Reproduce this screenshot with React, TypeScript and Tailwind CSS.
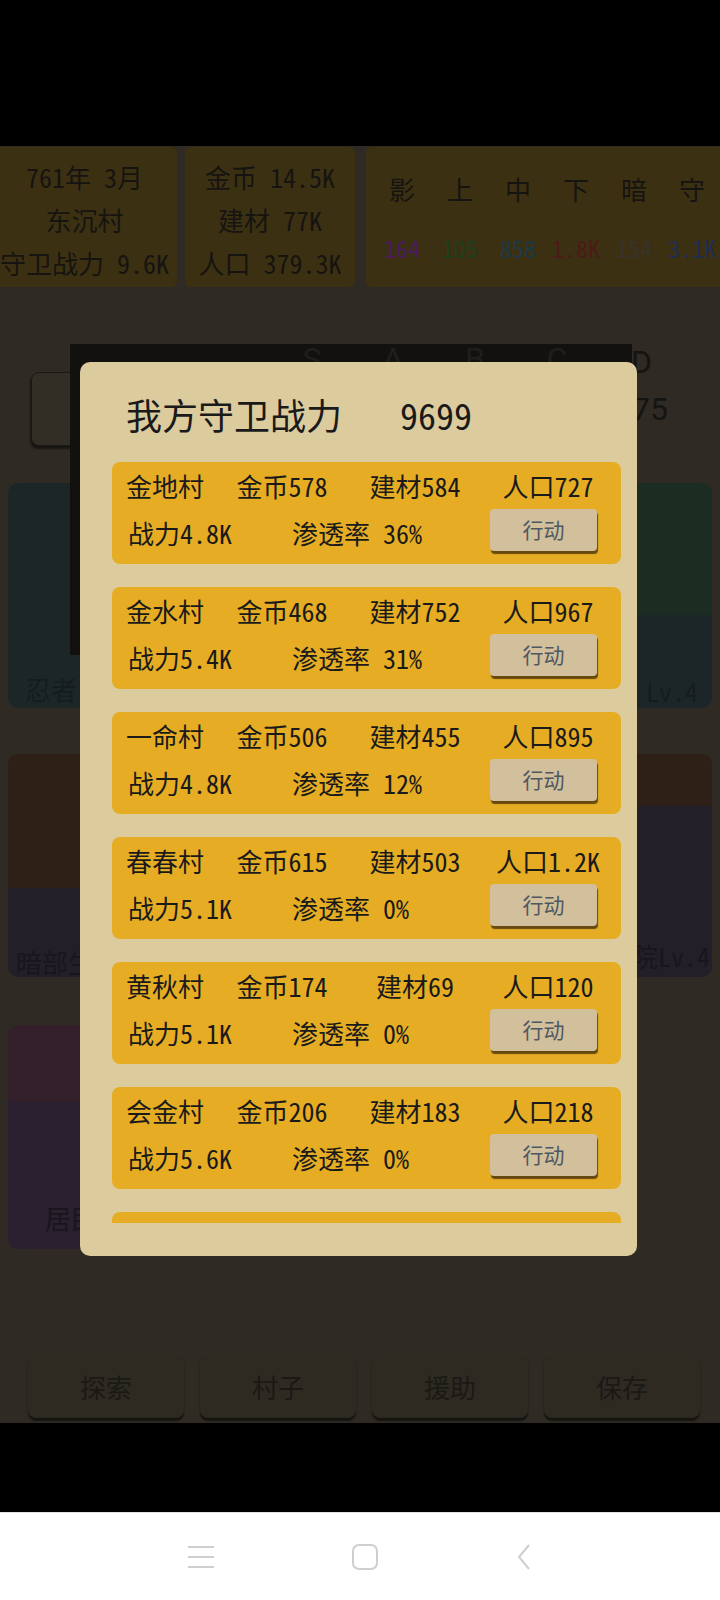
import React from "react";

const villages = [
  { name: "金地村", gold: "金币578", mat: "建材584", pop: "人口727", power: "战力4.8K", rate: "渗透率 36%" },
  { name: "金水村", gold: "金币468", mat: "建材752", pop: "人口967", power: "战力5.4K", rate: "渗透率 31%" },
  { name: "一命村", gold: "金币506", mat: "建材455", pop: "人口895", power: "战力4.8K", rate: "渗透率 12%" },
  { name: "春春村", gold: "金币615", mat: "建材503", pop: "人口1.2K", power: "战力5.1K", rate: "渗透率 0%" },
  { name: "黄秋村", gold: "金币174", mat: "建材69", pop: "人口120", power: "战力5.1K", rate: "渗透率 0%" },
  { name: "会金村", gold: "金币206", mat: "建材183", pop: "人口218", power: "战力5.6K", rate: "渗透率 0%" },
];

const ranks = [
  { label: "影", value: "164", color: "text-[#4b1c5e]" },
  { label: "上", value: "105", color: "text-[#1d3f1d]" },
  { label: "中", value: "858", color: "text-[#1c3946]" },
  { label: "下", value: "1.8K", color: "text-[#4c1a18]" },
  { label: "暗", value: "154", color: "text-[#37332a]" },
  { label: "守", value: "3.1K", color: "text-[#1f2d52]" },
];

const bottomButtons = ["探索", "村子", "援助", "保存"];

function VillageCard({ v }: { v: (typeof villages)[number] }) {
  return (
    <div className="h-[102px] shrink-0 rounded-[8px] bg-[#e6ad24] pt-[9px] text-[26px] text-[#1a1a1a]">
      <div className="grid h-[30px] grid-cols-[106px_128px_138px_128px] leading-[30px] whitespace-nowrap">
        <span className="text-center">{v.name}</span>
        <span className="text-center">{v.gold}</span>
        <span className="text-center">{v.mat}</span>
        <span className="text-center">{v.pop}</span>
      </div>
      <div className="mt-[8px] flex whitespace-nowrap">
        <span className="ml-[16px] w-[164px] pt-[9px] leading-[30px]">{v.power}</span>
        <span className="w-[198px] pt-[9px] leading-[30px]">{v.rate}</span>
        <button className="h-[42px] w-[107px] rounded-[4px] bg-[#d2bf9c] text-[21px] text-[#4d5863] shadow-[1px_3px_1px_rgba(60,40,10,0.75)]">
          行动
        </button>
      </div>
    </div>
  );
}

export default function App() {
  return (
    <div className="relative h-[1600px] w-[720px] overflow-hidden bg-[#2f2b24] font-['Noto_Sans_Mono_CJK_SC','Noto_Sans_CJK_SC',sans-serif]">
      {/* status bar */}
      <div className="h-[146px] bg-black" />

      {/* top info panels */}
      <div className="flex h-[141px] gap-[8px] pt-[1px] text-[26px] leading-[43px] text-[#161410]">
        <div className="ml-[-8px] flex w-[185px] shrink-0 flex-col items-center rounded-[6px] bg-[#3c3013] pt-[8px] whitespace-nowrap">
          <span>761年 3月</span>
          <span>东沉村</span>
          <span>守卫战力 9.6K</span>
        </div>
        <div className="flex w-[170px] shrink-0 flex-col items-center rounded-[6px] bg-[#3c3013] pt-[8px] whitespace-nowrap">
          <span>金币 14.5K</span>
          <span>建材 77K</span>
          <span>人口 379.3K</span>
        </div>
        <div className="ml-[3px] flex flex-1 rounded-l-[6px] bg-[#3c3013] pl-[7px] pt-[20px]">
          {ranks.map((r) => (
            <div key={r.label} className="flex w-[58px] shrink-0 flex-col items-center">
              <span className="leading-[44px]">{r.label}</span>
              <span className={`mt-[22px] text-[24px] leading-[30px] whitespace-nowrap ${r.color}`}>{r.value}</span>
            </div>
          ))}
        </div>
      </div>

      {/* main game area (dimmed) */}
      <div className="relative flex h-[1136px] flex-col">
        <div className="mt-[85px] flex h-[74px] shrink-0 items-center justify-between">
          <div className="ml-[31px] h-[74px] w-[150px] rounded-[8px] border border-[#1c1915] bg-[#322d25] shadow-[-1px_3px_2px_rgba(0,0,0,0.5)]" />
          <span className="mr-[52px] font-['Roboto',sans-serif] text-[32px] text-[#141412]">75</span>
        </div>

        <div className="mt-[37px] flex h-[225px] shrink-0 gap-[16px] px-[8px] text-[26px] text-[#161c1d]">
          <div className="flex flex-1 flex-col overflow-hidden rounded-[10px] bg-[#1c2627]">
            <div className="mt-auto pb-[4px] pl-[17px] leading-[30px]">忍者</div>
          </div>
          <div className="flex flex-1 flex-col overflow-hidden rounded-[10px]">
            <div className="h-[132px] bg-[#1b2d22]" />
            <div className="flex flex-1 items-end justify-end bg-[#1c2628] pb-[2px] pr-[14px] leading-[30px]">Lv.4</div>
          </div>
        </div>

        <div className="mt-[46px] flex h-[223px] shrink-0 gap-[16px] px-[8px] text-[26px] text-[#18161c]">
          <div className="flex flex-1 flex-col overflow-hidden rounded-[10px]">
            <div className="h-[134px] bg-[#2e2016]" />
            <div className="flex flex-1 items-end bg-[#231f28] pb-[0px] pl-[8px] leading-[30px]">暗部生</div>
          </div>
          <div className="flex flex-1 flex-col overflow-hidden rounded-[10px]">
            <div className="h-[52px] bg-[#2e2016]" />
            <div className="flex flex-1 items-end justify-end bg-[#231f28] pb-[6px] pr-[2px] leading-[30px]">学院Lv.4</div>
          </div>
        </div>

        <div className="mt-[48px] flex h-[224px] shrink-0 gap-[16px] px-[8px] text-[26px] text-[#18161c]">
          <div className="flex flex-1 flex-col overflow-hidden rounded-[10px]">
            <div className="h-[77px] bg-[#33202a]" />
            <div className="flex flex-1 items-end bg-[#2a2030] pb-[16px] pl-[37px] leading-[30px]">居民</div>
          </div>
          <div className="flex-1" />
        </div>

        <div className="mt-[106px] grid h-[63px] shrink-0 grid-cols-[156px_156px_156px_156px] gap-x-[16px] px-[28px]">
          {bottomButtons.map((b) => (
            <div
              key={b}
              className="flex items-center justify-center rounded-[8px] bg-[#2e2a22] text-[26px] text-[#1a1916] shadow-[0_3px_2px_rgba(0,0,0,0.55)]"
            >
              {b}
            </div>
          ))}
        </div>

        {/* dimmed black popup behind the dialog */}
        <div className="absolute left-[70px] top-[57px] h-[311px] w-[562px] bg-[#121110]">
          <div className="ml-[202px] flex font-['Roboto',sans-serif] text-[32px] leading-[30px] text-[#201e1b]">
            <span className="w-[80px] text-center">S</span>
            <span className="w-[82px] text-center">A</span>
            <span className="w-[82px] text-center">B</span>
            <span className="w-[82px] text-center">C</span>
          </div>
        </div>
        <span className="absolute left-[631px] top-[60px] font-['Roboto',sans-serif] text-[32px] leading-[30px] text-[#141412]">D</span>
      </div>

      {/* black bar */}
      <div className="h-[89px] bg-black" />

      {/* system nav bar */}
      <div className="flex h-[88px] items-center justify-center border-t border-[#e2e2e2] bg-white">
        <div className="flex w-[346px] items-center justify-between">
          <svg width="28" height="26" viewBox="0 0 28 26" fill="none" stroke="#cfcfcf" strokeWidth="2">
            <path d="M1 3h26M1 13h26M1 23h26" />
          </svg>
          <svg width="26" height="26" viewBox="0 0 26 26" fill="none" stroke="#cfcfcf" strokeWidth="2">
            <rect x="1" y="1" width="24" height="24" rx="6" />
          </svg>
          <svg width="18" height="28" viewBox="0 0 18 28" fill="none" stroke="#cfcfcf" strokeWidth="2">
            <path d="M14 2L4 14l10 12" />
          </svg>
        </div>
      </div>

      {/* modal dialog */}
      <div className="absolute left-[80px] top-[362px] flex h-[894px] w-[557px] flex-col rounded-[10px] bg-[#dccb9d] text-[#1a1a1a]">
        <div className="mt-[32px] flex h-[40px] items-center pl-[46px] text-[36px] whitespace-nowrap">
          <span>我方守卫战力</span>
          <span className="ml-[58px]">9699</span>
        </div>
        <div className="mt-[28px] ml-[32px] flex h-[761px] w-[509px] flex-col gap-[23px] overflow-hidden">
          {villages.map((v) => (
            <VillageCard key={v.name} v={v} />
          ))}
          <div className="h-[102px] shrink-0 rounded-[8px] bg-[#e6ad24]" />
        </div>
      </div>
    </div>
  );
}
